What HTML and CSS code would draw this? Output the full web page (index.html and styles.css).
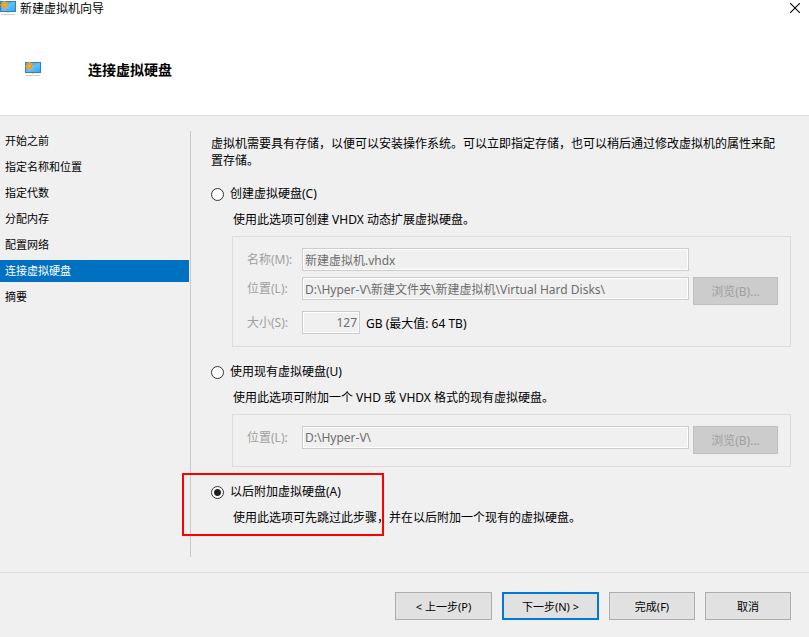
FILE: index.html
```html
<!DOCTYPE html>
<html lang="zh-CN">
<head>
    <meta charset="UTF-8">
    <meta name="viewport" content="width=device-width, initial-scale=1.0">
    <title>新建虚拟机向导</title>
    <link rel="stylesheet" href="styles.css">
</head>
<body>
    <svg class="sprite" aria-hidden="true">
        <defs>
            <linearGradient id="screen" x1="0" y1="0" x2="1" y2="1">
                <stop offset="0" stop-color="#2a93d8"/>
                <stop offset="0.5" stop-color="#5cc0ff"/>
                <stop offset="1" stop-color="#2ea6f5"/>
            </linearGradient>
        </defs>
        <symbol id="monitor" viewBox="0 0 16 16">
            <rect x="0.5" y="1.5" width="15" height="10" fill="url(#screen)" stroke="#3f7ea6"/>
            <rect x="7" y="12" width="2" height="1" fill="#c3ccd3"/>
            <rect x="1" y="14" width="14" height="1" fill="#c9ced2"/>
            <path d="M4.5 1v8M0.5 5h8M1.7 2.2l5.6 5.6M7.3 2.2l-5.6 5.6" stroke="#f7b23c" stroke-width="1.6"/>
            <circle cx="4.5" cy="5" r="2.7" fill="#f59a1b"/>
            <circle cx="4.5" cy="5" r="1" fill="#ffc64f"/>
        </symbol>
    </svg>

    <div class="window">
        <div class="titlebar">
            <svg class="icon"><use href="#monitor"/></svg>
            <span class="title">新建虚拟机向导</span>
            <button class="close" type="button" aria-label="关闭">
                <svg width="10" height="10" viewBox="0 0 10 10"><path d="M0 0L10 10M10 0L0 10" stroke="#000" stroke-width="1.1"/></svg>
            </button>
        </div>

        <header class="header">
            <svg class="icon"><use href="#monitor"/></svg>
            <h1>连接虚拟硬盘</h1>
        </header>

        <div class="body">
            <nav class="steps">
                <a href="#">开始之前</a>
                <a href="#">指定名称和位置</a>
                <a href="#">指定代数</a>
                <a href="#">分配内存</a>
                <a href="#">配置网络</a>
                <a href="#" class="active">连接虚拟硬盘</a>
                <a href="#">摘要</a>
            </nav>

            <main class="content">
                <p class="intro">虚拟机需要具有存储，以便可以安装操作系统。可以立即指定存储，也可以稍后通过修改虚拟机的属性来配置存储。</p>

                <section class="option">
                    <label class="choice"><input type="radio" name="disk">创建虚拟硬盘(C)</label>
                    <p class="desc">使用此选项可创建 VHDX 动态扩展虚拟硬盘。</p>
                    <div class="group">
                        <label for="name">名称(M):</label>
                        <input type="text" id="name" value="新建虚拟机.vhdx" disabled>
                        <label for="path">位置(L):</label>
                        <input type="text" id="path" value="D:\Hyper-V\新建文件夹\新建虚拟机\Virtual Hard Disks\" disabled>
                        <button class="browse" type="button" disabled>浏览(B)...</button>
                        <label for="size">大小(S):</label>
                        <div class="size">
                            <input type="text" id="size" value="127" disabled>
                            <span>GB (最大值: 64 TB)</span>
                        </div>
                    </div>
                </section>

                <section class="option">
                    <label class="choice"><input type="radio" name="disk">使用现有虚拟硬盘(U)</label>
                    <p class="desc">使用此选项可附加一个 VHD 或 VHDX 格式的现有虚拟硬盘。</p>
                    <div class="group">
                        <label for="existing">位置(L):</label>
                        <input type="text" id="existing" value="D:\Hyper-V\" disabled>
                        <button class="browse" type="button" disabled>浏览(B)...</button>
                    </div>
                </section>

                <section class="option marked">
                    <label class="choice"><input type="radio" name="disk" checked>以后附加虚拟硬盘(A)</label>
                    <p class="desc">使用此选项可先跳过此步骤，并在以后附加一个现有的虚拟硬盘。</p>
                </section>
            </main>
        </div>

        <footer class="footer">
            <button class="btn wide" type="button">&lt; 上一步(P)</button>
            <button class="btn wide primary" type="button">下一步(N) &gt;</button>
            <button class="btn" type="button">完成(F)</button>
            <button class="btn" type="button">取消</button>
        </footer>
    </div>
</body>
</html>
```

FILE: styles.css
```css
* {
    box-sizing: border-box;
}
body {
    margin: 0;
    background-color: #f0f0f0;
    color: #000;
    font-family: "Noto Sans", "Noto Sans CJK SC", sans-serif;
    font-size: 12px;
}
h1, p {
    margin: 0;
}
button, input {
    font: inherit;
}
.sprite {
    position: absolute;
    width: 0;
    height: 0;
}
.icon {
    width: 16px;
    height: 16px;
    flex: none;
}
.window {
    display: flex;
    flex-direction: column;
    min-height: 100vh;
}

/* title bar and header */
.titlebar {
    display: flex;
    align-items: flex-start;
    gap: 4px;
    height: 18px;
    padding-right: 9px;
    background-color: #fff;
}
.title {
    flex: 1;
    line-height: 17px;
}
.close {
    display: flex;
    padding: 3px 0;
    border: none;
    background: none;
}
.header {
    display: flex;
    align-items: flex-start;
    gap: 47px;
    height: 98px;
    padding: 43px 25px 0;
    background-color: #fff;
    border-bottom: 1px solid #dfdfdf;
}
.header h1 {
    font-size: 14px;
    line-height: 18px;
}

/* steps on the left */
.body {
    display: flex;
    flex: 1;
}
.steps {
    display: flex;
    flex-direction: column;
    gap: 4px;
    width: 190px;
    padding: 14px 1px 0 0;
    flex: none;
}
.steps a {
    padding-left: 5px;
    font-size: 11px;
    line-height: 22px;
    color: #000;
    text-decoration: none;
}
.steps .active {
    background-color: #0070c0;
    color: #fff;
}

/* page content */
.content {
    display: flex;
    flex-direction: column;
    gap: 16px;
    flex: 1;
    margin: 15px 0;
    padding: 4px 18px 0 20px;
    border-left: 1px solid #c8c8c8;
}
.intro {
    padding-right: 12px;
    line-height: 17px;
}
.choice {
    display: flex;
    align-items: center;
    gap: 6px;
    width: fit-content;
    line-height: 18px;
}
.choice input {
    appearance: none;
    width: 13px;
    height: 13px;
    margin: 0;
    border: 1px solid #333;
    border-radius: 50%;
    background-color: #fff;
}
.choice input:checked {
    background-image: radial-gradient(circle, #222 3px, transparent 4px);
}
.desc {
    margin-top: 8px;
    padding-left: 22px;
    line-height: 18px;
}
.group {
    display: grid;
    grid-template-columns: 51px 1fr 85px;
    gap: 6px 4px;
    align-items: start;
    margin: 7px 0 0 21px;
    padding: 11px 12px 12px 14px;
    border: 1px solid #dcdcdc;
}
.group label {
    grid-column: 1;
    line-height: 23px;
    color: #a0a0a0;
}
.group input {
    width: 100%;
    height: 23px;
    padding: 0 2px;
    border: 1px solid #ccc;
    outline: 1px solid #fff;
    outline-offset: -2px;
    background-color: #f0f0f0;
    color: #6d6d6d;
}
.size {
    display: flex;
    align-items: center;
    gap: 6px;
}
.group .size input {
    width: 58px;
    text-align: right;
}
.browse {
    height: 28px;
    padding: 0;
    border: 1px solid #bfbfbf;
    background-color: #ccc;
    color: #a0a0a0;
}

/* red frame round the chosen option */
.marked {
    position: relative;
}
.marked::after {
    content: "";
    position: absolute;
    top: -10px;
    left: -29px;
    width: 198px;
    height: 59px;
    border: 2px solid #f00;
    pointer-events: none;
}

/* buttons at the bottom */
.footer {
    display: flex;
    justify-content: flex-end;
    gap: 10px;
    padding: 19px 18px 17px;
    border-top: 1px solid #dfdfdf;
}
.btn {
    width: 86px;
    height: 28px;
    padding: 0;
    border: 1px solid #adadad;
    background-color: #e1e1e1;
    color: #000;
    font-size: 11px;
}
.wide {
    width: 97px;
}
.primary {
    border: 2px solid #0078d7;
}
```
